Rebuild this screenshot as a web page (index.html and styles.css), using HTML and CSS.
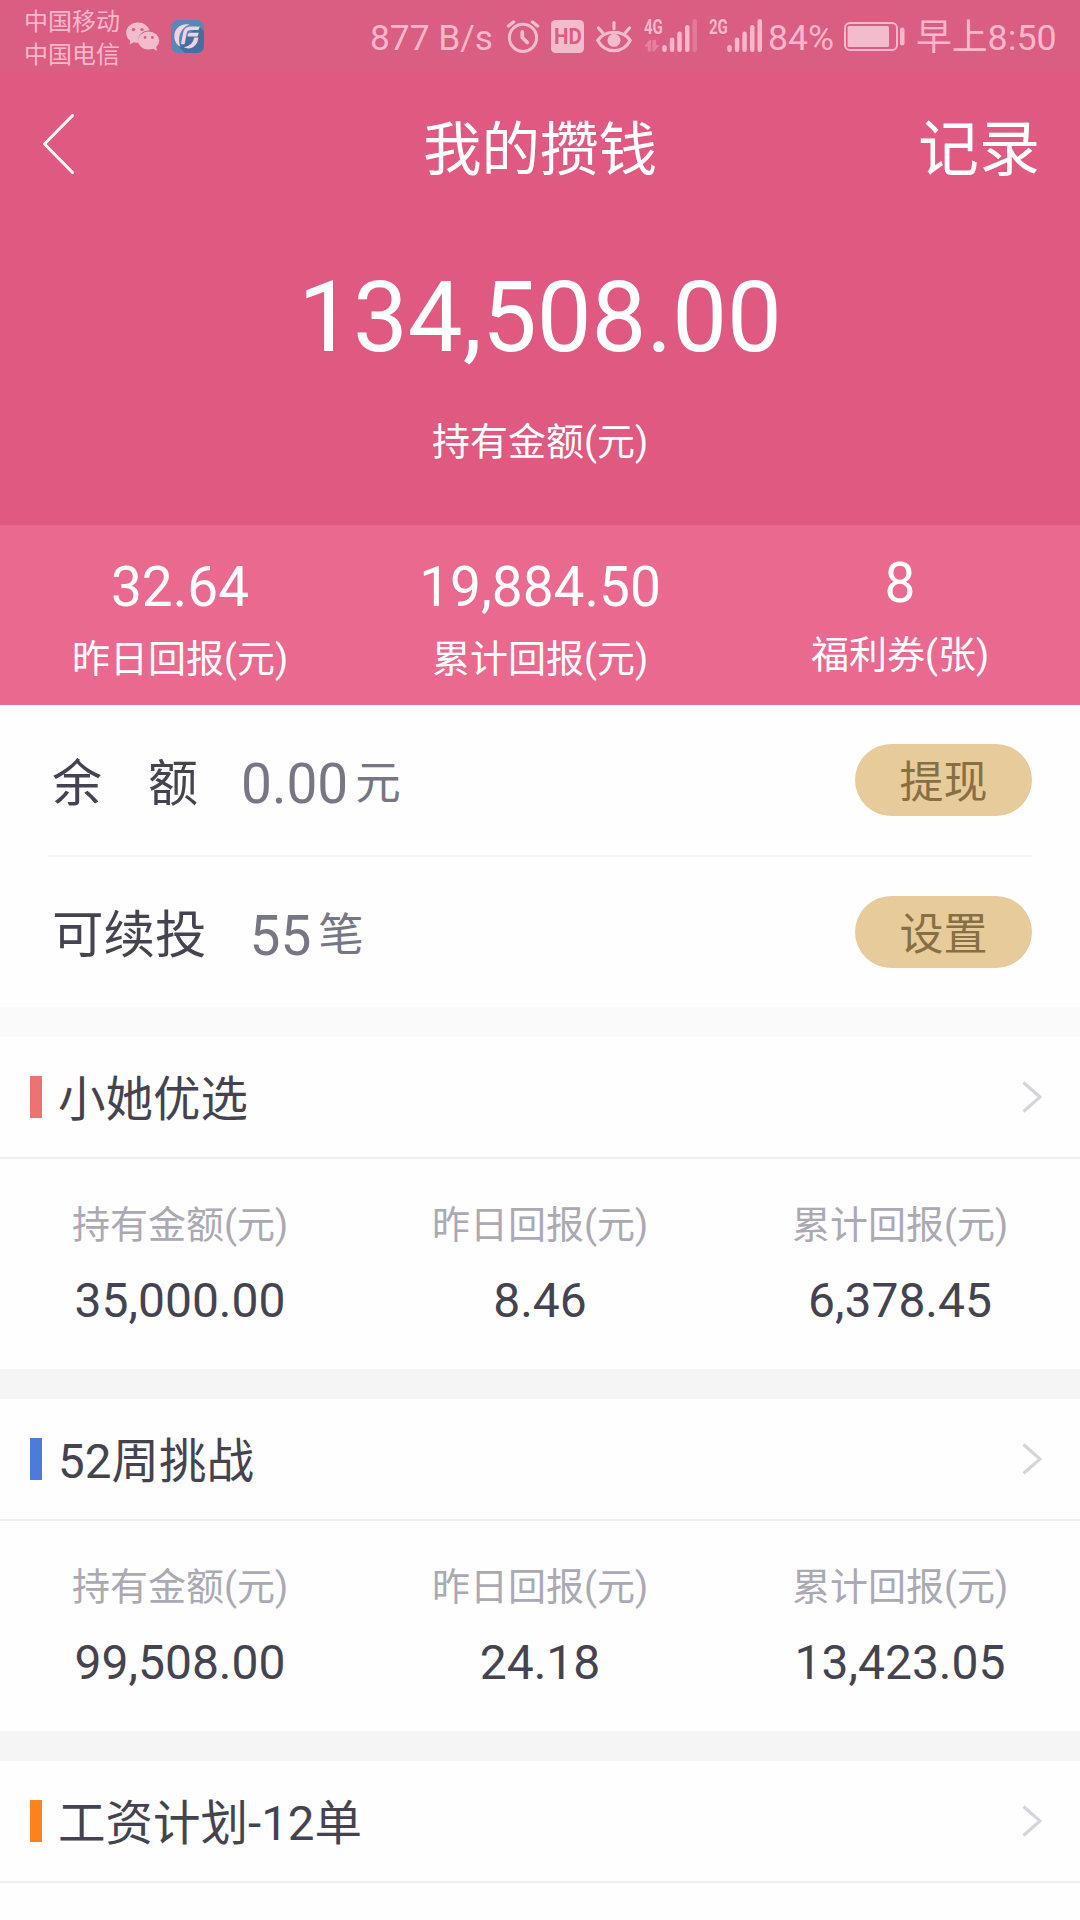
FILE: index.html
```html
<!DOCTYPE html>
<html lang="zh-CN">
<head>
<meta charset="utf-8">
<title>我的攒钱</title>
<link rel="stylesheet" href="styles.css">
</head>
<body>
<div class="screen">
  <div class="status">
    <div class="carriers"><span>中国移动</span><span>中国电信</span></div>
    <svg class="wechat" width="34" height="30" viewBox="0 0 34 30">
      <path fill="#f3bccd" d="M12 .5C5.400 .5 .2 5 .2 11c0 3.300 1.600 6 4.200 7.900L3.600 22.500l4.200-2.200c1.300.4 2.700.5 4.200.5h.8a10 10 0 0 1-.5-3c0-5.200 4.700-9.300 10.600-9.300h.6C22.300 3.800 17.600 .5 12 .5z"/>
      <ellipse cx="22.600" cy="18.600" rx="10.600" ry="9" fill="#f3bccd"/>
      <path fill="#f3bccd" d="M26 26l5 3-1-4.500z"/>
      <g fill="#d95e82"><circle cx="7.500" cy="7.600" r="1.700"/><circle cx="16" cy="7.600" r="1.700"/><circle cx="19" cy="15.500" r="1.400"/><circle cx="26.400" cy="15.500" r="1.400"/></g>
    </svg>
    <svg class="fund" width="33" height="33" viewBox="0 0 33 33">
      <rect width="33" height="33" rx="7" fill="#5a86b8"/>
      <path d="M27 5l6 6v15a7 7 0 0 1-7 7H14l-7-7z" fill="#466f9f"/>
      <path d="M18.500 4.600C10 2.800 3.300 8.500 3.300 16.300c0 4.800 2.500 8.700 6.200 10.700C6.300 20 8 8.500 18.500 4.600z" fill="#efd3e1"/>
      <path d="M28.800 6.500h-8.500c-5 0-7.500 2.600-8.300 7L10 24.300h3.600L15.500 14c.6-3 1.800-3.900 4.300-3.900h7.700z" fill="#efd3e1"/>
      <path d="M27.800 12.700h-8.300c-1.600 0-2.300.7-2.600 2.200l-.3 1.500h9.900z" fill="#efd3e1"/>
      <path d="M27.300 17.400h-4.200c-.7 5-4.200 8.800-10.400 9.900c1.500.8 3.400 1.200 5.300 1.100c5.200-.6 9-4.900 9.300-11z" fill="#efd3e1"/>
    </svg>
    <span class="speed">877 B/s</span>
    <svg class="alarm" width="34" height="33" viewBox="0 0 34 33" fill="none" stroke="#f3bccd" stroke-width="3" stroke-linecap="round">
      <circle cx="17" cy="17.800" r="13.600"/><path d="M16.300 12v5.500l5 5" stroke-width="3.800"/><path d="M2.500 6l5-4M31.500 6l-5-4" stroke-width="3.400"/>
    </svg>
    <div class="hd"><span>HD</span></div>
    <svg class="eye" width="36" height="32" viewBox="0 0 36 32" fill="none" stroke="#f3bccd" stroke-width="3.200" stroke-linecap="round">
      <path d="M1.800 19.500C9 8.500 27 8.500 34.200 19.500C27 33 9 33 1.800 19.500z"/><circle cx="18" cy="19.300" r="6.500" fill="#f3bccd" stroke="none"/><path d="M18 1.600v6M2.500 7l4 4.500M33.500 7l-4 4.500"/>
    </svg>
    <div class="signal">
      <span class="net">4G</span>
      <svg width="54" height="34" viewBox="0 0 54 34" fill="#fdb7cd">
        <path opacity=".38" d="M0 27.500L5.500 21h1.700v11.500H3.800v-5zM8.500 21h3.400v5h3.600L10 32.500H8.500z"/>
        <rect x="18.300" y="26" width="4.500" height="7" rx="2.200"/><rect x="25.800" y="18.500" width="4.500" height="14.500" rx="2.200"/><rect x="33.300" y="12.500" width="4.500" height="20.500" rx="2.200"/><rect x="41" y="6" width="4.500" height="27" rx="2.200"/><rect x="48.500" y="0" width="4.500" height="33" rx="2.200" opacity=".3"/>
      </svg>
    </div>
    <div class="signal second">
      <span class="net">2G</span>
      <svg width="54" height="34" viewBox="0 0 54 34" fill="#fdb7cd">
        <rect x="18.300" y="26" width="4.500" height="7" rx="2.200"/><rect x="25.800" y="18.500" width="4.500" height="14.500" rx="2.200"/><rect x="33.300" y="12.500" width="4.500" height="20.500" rx="2.200"/><rect x="41" y="6" width="4.500" height="27" rx="2.200"/><rect x="48.500" y="0" width="4.500" height="33" rx="2.200"/>
      </svg>
    </div>
    <span class="percent">84%</span>
    <svg class="battery" width="61" height="29" viewBox="0 0 61 29">
      <rect x="1" y="1" width="52" height="27" rx="5" fill="none" stroke="#fdb7cd" stroke-width="2"/><rect x="3.600" y="4" width="41.400" height="21" rx="1.500" fill="#f3bccd"/><rect x="56" y="5.500" width="4.500" height="18" rx="2.200" fill="#fdb7cd"/>
    </svg>
    <span class="time">早上8:50</span>
  </div>

  <div class="hero">
    <div class="navbar">
      <svg class="back" width="34" height="62" viewBox="0 0 34 62" fill="none" stroke="#fff" stroke-width="3" stroke-linecap="round" stroke-linejoin="round"><path d="M30.500 2.500L2.500 31l28 28.500"/></svg>
      <h1 class="title">我的攒钱</h1>
      <a class="records">记录</a>
    </div>
    <div class="total">134,508.00</div>
    <div class="total-label">持有金额(元)</div>
  </div>

  <div class="strip">
    <div class="stat"><b>32.64</b><span>昨日回报(元)</span></div>
    <div class="stat"><b>19,884.50</b><span>累计回报(元)</span></div>
    <div class="stat coupon"><b>8</b><span>福利券(张)</span></div>
  </div>

  <div class="account">
    <div class="row"><span class="name spread"><i>余</i><i>额</i></span><span class="num">0.00</span><span class="unit">元</span><a class="pill">提现</a></div>
    <div class="row"><span class="name">可续投</span><span class="num">55</span><span class="unit">笔</span><a class="pill">设置</a></div>
  </div>

  <div class="plan first">
    <div class="plan-head"><span class="mark red"></span><h2>小她优选</h2><svg class="more" width="20" height="32" viewBox="0 0 20 32"><path d="M1.500 1.500L18 16 1.500 30.500"/></svg></div>
    <div class="plan-body">
      <div class="cell"><span>持有金额(元)</span><b>35,000.00</b></div>
      <div class="cell"><span>昨日回报(元)</span><b>8.46</b></div>
      <div class="cell"><span>累计回报(元)</span><b>6,378.45</b></div>
    </div>
  </div>
  <div class="plan">
    <div class="plan-head"><span class="mark blue"></span><h2>52周挑战</h2><svg class="more" width="20" height="32" viewBox="0 0 20 32"><path d="M1.500 1.500L18 16 1.500 30.500"/></svg></div>
    <div class="plan-body">
      <div class="cell"><span>持有金额(元)</span><b>99,508.00</b></div>
      <div class="cell"><span>昨日回报(元)</span><b>24.18</b></div>
      <div class="cell"><span>累计回报(元)</span><b>13,423.05</b></div>
    </div>
  </div>
  <div class="plan">
    <div class="plan-head"><span class="mark orange"></span><h2>工资计划-12单</h2><svg class="more" width="20" height="32" viewBox="0 0 20 32"><path d="M1.500 1.500L18 16 1.500 30.500"/></svg></div>
  </div>
</div>
</body>
</html>
```
FILE: styles.css
```css
* { box-sizing: border-box; margin: 0; padding: 0; }
body { background: #fefefe; font-family: Roboto, "Noto Sans CJK SC", sans-serif; }
b, i, h1, h2 { font-weight: 400; font-style: normal; }
svg { display: block; flex: none; }
.screen { width: 1080px; height: 1920px; overflow: hidden; background: #fefefe; }

/* Status bar */
.status { height: 72px; display: flex; align-items: flex-start; background: #d95e82; color: #fdb7cd; font-size: 36px; line-height: 42px; white-space: nowrap; }
.status > span { flex: none; padding-top: 17px; }
.carriers { width: 96px; flex: none; margin: 6px 0 0 24px; display: flex; flex-direction: column; font-size: 24px; line-height: 33px; }
.wechat { margin: 22px 0 0 6px; }
.fund { margin: 20px 0 0 11px; }
.speed { width: 136px; margin-left: 166px; font-size: 35.300px; }
.alarm { margin-top: 20px; }
.hd { width: 33px; height: 33px; flex: none; margin: 20px 0 0 11px; border-radius: 4.500px; background: #f3bccd; color: #d95e82; font-size: 22px; font-weight: 700; line-height: 33px; display: flex; justify-content: center; }
.hd span { transform: scaleX(.93); }
.eye { margin: 21px 0 0 12px; }
.signal { width: 54px; height: 34px; flex: none; margin: 19px 0 0 12px; display: grid; }
.second { margin-left: 11px; }
.signal > * { grid-area: 1 / 1; }
.net { font-size: 20px; font-weight: 700; line-height: 20px; margin-top: -2px; transform: scaleX(.75); transform-origin: left; }
.percent { width: 76px; margin-left: 5px; font-size: 35.500px; }
.battery { margin-top: 22px; }
.time { margin-left: 11px; font-size: 35.800px; }

/* Header and total */
.hero { height: 453px; background: #df5980; color: #fff; text-align: center; }
.navbar { height: 152px; padding: 4px 40px 0 42px; display: grid; grid-template-columns: 1fr auto 1fr; align-items: center; line-height: 60px; }
.back { margin-top: -13px; }
.title { margin-right: 2px; font-size: 58.500px; }
.records { font-size: 61px; text-align: right; }
.total { margin-top: 45px; font-size: 97.600px; line-height: 98px; }
.total-label { margin-top: 53px; font-size: 38px; line-height: 44px; }

/* Earnings strip */
.strip { height: 180px; display: grid; grid-template-columns: repeat(3, 1fr); background: #ea698f; color: #fff; text-align: center; }
.stat { padding-top: 34px; display: flex; flex-direction: column; gap: 22px; }
.coupon { padding-top: 30px; }
.stat b { font-size: 55px; line-height: 56px; }
.stat span { font-size: 38px; line-height: 44px; }

/* Balance rows */
.account { height: 302px; padding: 0 48px; }
.row { height: 150px; padding-left: 4px; display: flex; align-items: center; line-height: 60px; }
.row:first-child { height: 152px; border-bottom: 2px solid #f5f5f5; }
.name { margin-top: 7px; font-size: 51.500px; color: #44434f; }
.spread { display: flex; gap: 46px; font-size: 50px; }
.num { margin: 7px 0 0 43px; font-size: 55px; color: #777683; }
.unit { margin: 7px 0 0 7px; font-size: 45.500px; color: #777683; }
.pill { width: 177px; height: 72px; margin-left: auto; border-radius: 36px; background: #e8cb9b; color: #876f45; font-size: 44px; line-height: 78px; text-align: center; }

/* Plans */
.plan { border-top: 30px solid #f5f5f5; }
.first { border-top-color: #fafafa; }
.plan-head { height: 122px; padding: 0 38px 0 30px; display: flex; align-items: center; border-bottom: 2px solid #efefef; }
.mark { width: 12px; height: 42px; }
.red { background: #ed7272; }
.blue { background: #4d7bdb; }
.orange { background: #fb821d; }
.plan-head h2 { margin: 5px auto 0 16px; font-size: 47.500px; line-height: 60px; color: #44434f; }
.more { fill: none; stroke: #d5d4db; stroke-width: 3; }
.plan-body { height: 210px; padding-top: 44px; display: grid; grid-template-columns: repeat(3, 1fr); text-align: center; }
.cell { display: flex; flex-direction: column; gap: 26px; }
.cell span { font-size: 38px; line-height: 44px; color: #aaa9b4; }
.cell b { font-size: 48px; line-height: 56px; color: #44434f; }
```
